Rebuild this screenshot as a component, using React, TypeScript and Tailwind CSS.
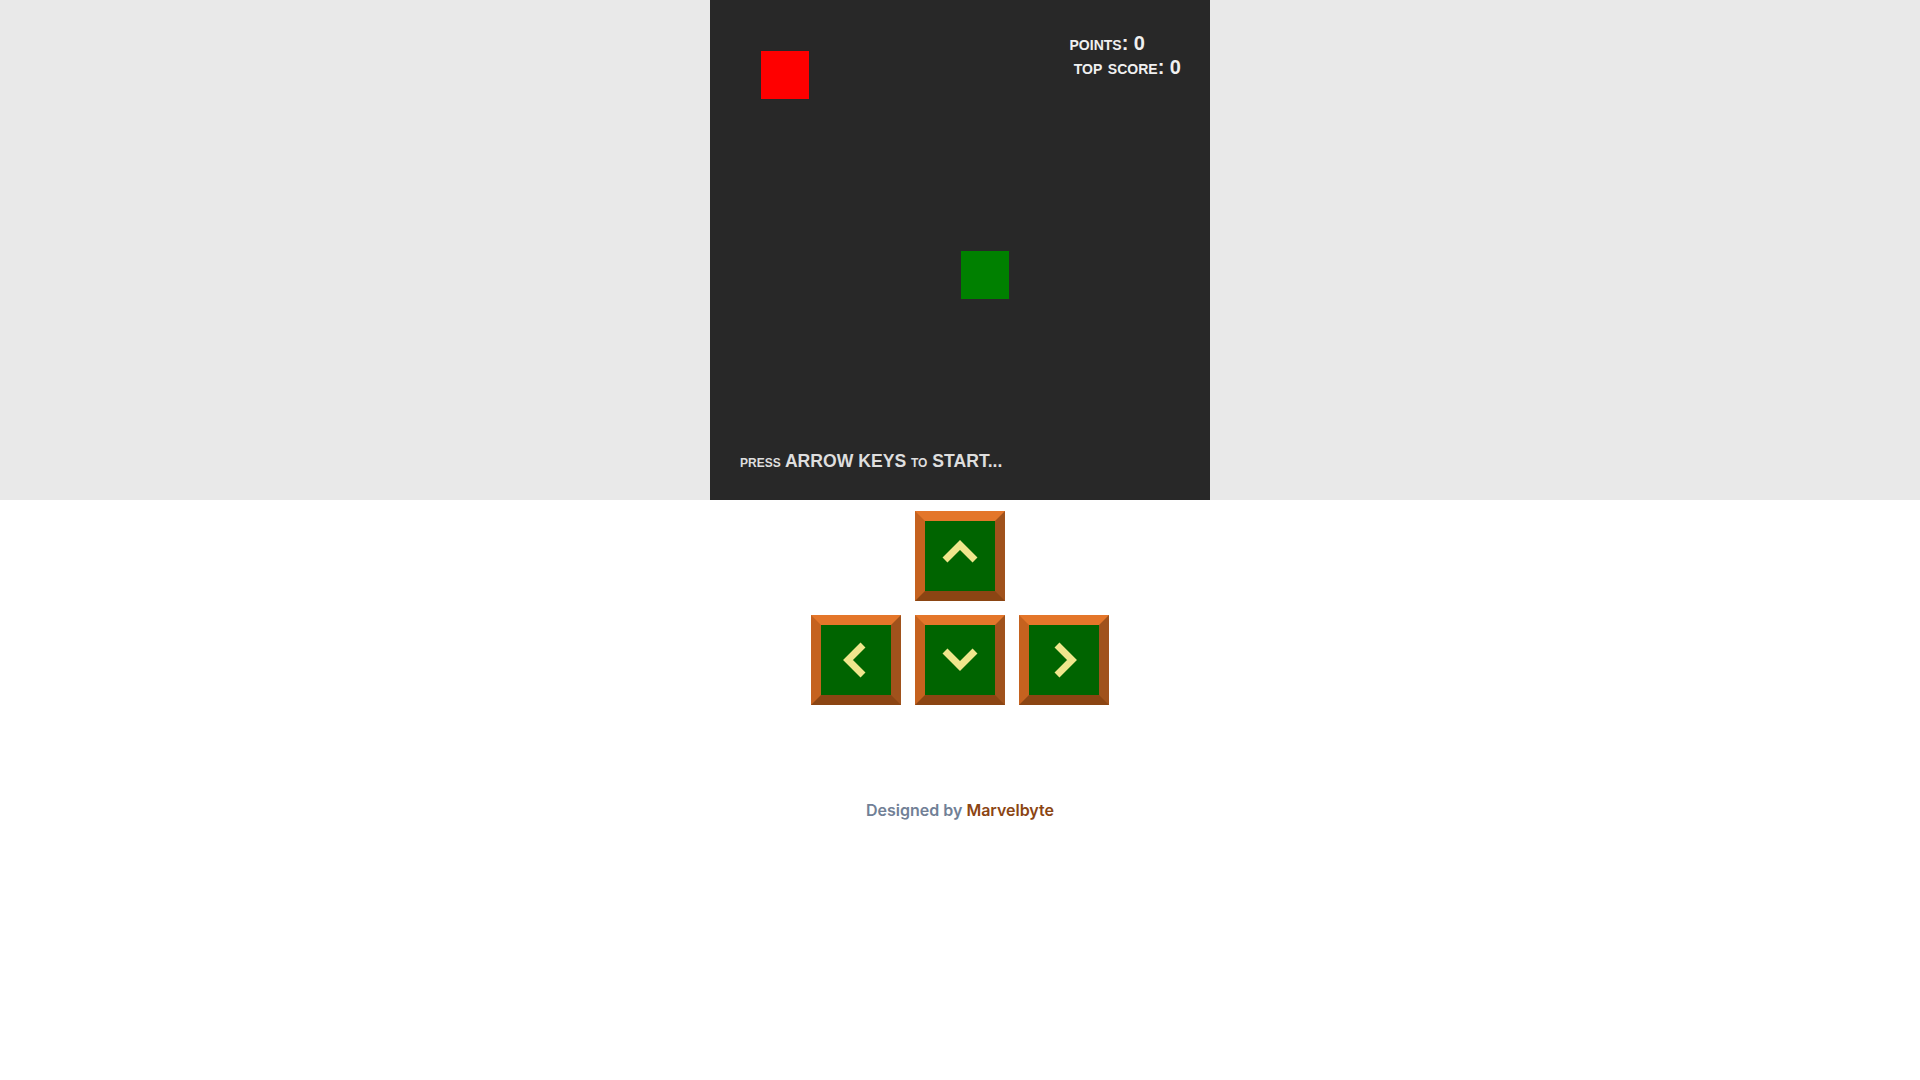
import type { ReactNode } from "react";

type Dir = "up" | "down" | "left" | "right";

const Chevron = ({ dir }: { dir: Dir }) => {
  const rot = { up: "rotate-0 -translate-y-[5px]", down: "rotate-180", left: "-rotate-90 -translate-x-[2px]", right: "rotate-90 translate-x-[2px]" }[dir];
  return (
    <svg width="40" height="26" viewBox="0 0 40 26" className={rot}>
      <polyline
        points="5,22 20,7 35,22"
        fill="none"
        stroke="#f0e68c"
        strokeWidth="7"
        strokeLinejoin="miter"
        strokeLinecap="butt"
      />
    </svg>
  );
};

const Key = ({ children }: { children: ReactNode }) => (
  <button
    type="button"
    className="flex h-[90px] w-[90px] items-center justify-center border-[10px] border-t-[#e4762a] border-l-[#c5621f] border-r-[#a0521c] border-b-[#8b4513] bg-[#006400]"
  >
    {children}
  </button>
);

const Cell = ({ x, y, color }: { x: number; y: number; color: string }) => (
  <div
    className={`absolute h-[48px] w-[48px] ${color}`}
    style={{ left: x * 50 + 1, top: y * 50 + 1 }}
  />
);

export default function App() {
  return (
    <div className="min-h-screen bg-white">
      <div className="flex w-full justify-center bg-[#e9e9e9]">
        <div className="relative h-[500px] w-[500px] bg-[#282828] font-['Liberation_Sans',Arial,sans-serif] font-bold">
          <Cell x={1} y={1} color="bg-[#ff0000]" />
          <Cell x={5} y={5} color="bg-[#008000]" />

          <div className="absolute top-[31px] right-[29px] flex flex-col items-end text-[20px] leading-[24px] text-[#f0f0f0] [font-variant:small-caps]">
            <div className="mr-[36px]">points: 0</div>
            <div>top score: 0</div>
          </div>

          <div className="absolute top-[451px] left-[30px] text-[17.6px] leading-[20px] text-[#dedede] [font-variant:small-caps]">
            press ARROW KEYS to START...
          </div>
        </div>
      </div>

      <div className="flex flex-col items-center gap-[14px] pt-[11px]">
        <Key>
          <Chevron dir="up" />
        </Key>
        <div className="flex gap-[14px]">
          <Key>
            <Chevron dir="left" />
          </Key>
          <Key>
            <Chevron dir="down" />
          </Key>
          <Key>
            <Chevron dir="right" />
          </Key>
        </div>
      </div>

      <p className="mt-[93px] text-center font-['Inter',sans-serif] text-base leading-6 font-semibold text-[#718096]">
        Designed by <span className="text-[#8b4513]">Marvelbyte</span>
      </p>
    </div>
  );
}
